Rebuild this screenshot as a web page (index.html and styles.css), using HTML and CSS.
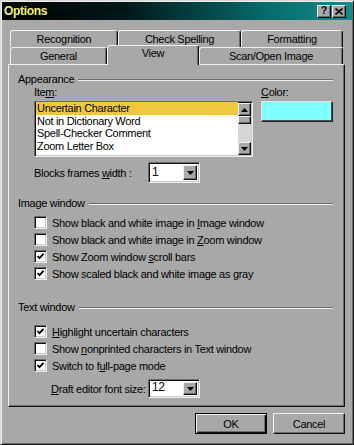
FILE: index.html
```html
<!DOCTYPE html>
<html lang="en">
<head>
    <meta charset="UTF-8">
    <title>Options</title>
    <link rel="stylesheet" href="styles.css">
</head>
<body>

<div class="window">
    <div class="titlebar">
        <span class="title">Options</span>
        <div class="caption-buttons">
            <span class="cap-btn help">?</span>
            <span class="cap-btn">
                <svg width="8" height="7" viewBox="0 0 8 7"><path d="M0.5 0.5L7.5 6.5M7.5 0.5L0.5 6.5" stroke="#000" stroke-width="1.6"/></svg>
            </span>
        </div>
    </div>

    <div class="client">
        <div class="tabs">
            <div class="tab-row">
                <div class="tab tab-recognition">Recognition</div>
                <div class="tab tab-spelling">Check Spelling</div>
                <div class="tab tab-formatting">Formatting</div>
            </div>
            <div class="tab-row">
                <div class="tab tab-general">General</div>
                <div class="tab tab-view selected">View</div>
                <div class="tab tab-scan">Scan/Open Image</div>
            </div>
        </div>

        <div class="panel">
            <div class="group-title"><span>Appearance</span></div>
            <div class="appearance">
                <div class="item-col">
                    <label class="field-label">Ite<u>m</u>:</label>
                    <div class="listbox">
                        <div class="list-items">
                            <div class="list-item selected">Uncertain Character</div>
                            <div class="list-item">Not in Dictionary Word</div>
                            <div class="list-item">Spell-Checker Comment</div>
                            <div class="list-item">Zoom Letter Box</div>
                            <div class="list-item">Zoom Letter Background</div>
                        </div>
                        <div class="scrollbar">
                            <div class="sb-btn"><svg width="7" height="4" viewBox="0 0 7 4"><path d="M3.5 0L7 4H0z"/></svg></div>
                            <div class="sb-thumb"></div>
                            <div class="sb-track"></div>
                            <div class="sb-btn"><svg width="7" height="4" viewBox="0 0 7 4"><path d="M0 0h7L3.5 4z"/></svg></div>
                        </div>
                    </div>
                </div>
                <div class="color-col">
                    <label class="field-label"><u>C</u>olor:</label>
                    <div class="swatch"></div>
                </div>
            </div>

            <div class="field-row blocks-row">
                <label>Blocks frames <u>w</u>idth :</label>
                <div class="combo">
                    <span class="combo-value">1</span>
                    <span class="combo-btn"><svg width="7" height="4" viewBox="0 0 7 4"><path d="M0 0h7L3.5 4z"/></svg></span>
                </div>
            </div>

            <div class="group-title image-title"><span>Image window</span></div>
            <div class="checks image-checks">
                <div class="check-row"><span class="checkbox"></span><span>Show black and white image in <u>I</u>mage window</span></div>
                <div class="check-row"><span class="checkbox"></span><span>Show black and white image in <u>Z</u>oom window</span></div>
                <div class="check-row"><span class="checkbox checked"><svg width="9" height="9" viewBox="0 0 9 9"><path d="M1.5 4L3.5 6.2L7.5 1.8" fill="none" stroke="#000" stroke-width="1.8"/></svg></span><span>Show Zoom window <u>s</u>croll bars</span></div>
                <div class="check-row"><span class="checkbox checked"><svg width="9" height="9" viewBox="0 0 9 9"><path d="M1.5 4L3.5 6.2L7.5 1.8" fill="none" stroke="#000" stroke-width="1.8"/></svg></span><span>Show scaled black and white image as gray</span></div>
            </div>

            <div class="group-title text-title"><span>Text window</span></div>
            <div class="checks text-checks">
                <div class="check-row"><span class="checkbox checked"><svg width="9" height="9" viewBox="0 0 9 9"><path d="M1.5 4L3.5 6.2L7.5 1.8" fill="none" stroke="#000" stroke-width="1.8"/></svg></span><span><u>H</u>ighlight uncertain characters</span></div>
                <div class="check-row"><span class="checkbox"></span><span>Show <u>n</u>onprinted characters in Text window</span></div>
                <div class="check-row"><span class="checkbox checked"><svg width="9" height="9" viewBox="0 0 9 9"><path d="M1.5 4L3.5 6.2L7.5 1.8" fill="none" stroke="#000" stroke-width="1.8"/></svg></span><span>Switch to f<u>u</u>ll-page mode</span></div>
            </div>

            <div class="field-row draft-row">
                <label class="draft-label"><u>D</u>raft editor font size:</label>
                <div class="combo combo-short">
                    <span class="combo-value">12</span>
                    <span class="combo-btn"><svg width="7" height="4" viewBox="0 0 7 4"><path d="M0 0h7L3.5 4z"/></svg></span>
                </div>
            </div>
        </div>

        <div class="buttons">
            <button class="btn btn-default">OK</button>
            <button class="btn">Cancel</button>
        </div>
    </div>
</div>

</body>
</html>
```

FILE: styles.css
```css
* {
    margin: 0;
    padding: 0;
    box-sizing: border-box;
}

body {
    width: 354px;
    height: 445px;
    background-color: #a8a8a8;
    font: 11px "Liberation Sans", Arial, sans-serif;
    letter-spacing: -0.3px;
    color: #000;
    overflow: hidden;
}

u {
    text-decoration-thickness: 1px;
    text-underline-offset: 1px;
}

/* window frame */
.window {
    width: 354px;
    height: 445px;
    padding: 1px;
    border: 1px solid;
    border-color: #d8d8d8 #1a1a1a #1a1a1a #d8d8d8;
    box-shadow: inset 1px 1px #f0f0f0, inset -1px -1px #6c6c6c;
}

.titlebar {
    height: 18px;
    display: flex;
    align-items: center;
    justify-content: space-between;
    padding: 0 6px 0 2px;
    background: linear-gradient(to right, #000000 0%, #001818 35%, #076a6a 75%, #138c8c 100%);
}

.title {
    color: #f4f07a;
    font-weight: bold;
    font-size: 12px;
}

.caption-buttons {
    display: flex;
    gap: 1px;
}

.cap-btn {
    width: 14px;
    height: 13px;
    display: flex;
    align-items: center;
    justify-content: center;
    background-color: #a8a8a8;
    border: 1px solid;
    border-color: #f0f0f0 #101010 #101010 #f0f0f0;
    box-shadow: inset -1px -1px #6c6c6c;
}

.help {
    font-weight: bold;
    font-size: 10px;
    line-height: 10px;
}

/* tabs */
.client {
    padding: 10px 6px 0 6px;
}

.tabs {
    margin-left: 2px;
}

.tab-row {
    display: flex;
    height: 17px;
}

.tab {
    height: 17px;
    line-height: 16px;
    text-align: center;
    background-color: #a8a8a8;
    border-top: 1px solid #f0f0f0;
    border-left: 1px solid #f0f0f0;
    border-right: 1px solid #101010;
    box-shadow: inset -1px 0 #6c6c6c;
    border-radius: 3px 3px 0 0;
}

.tab-recognition { width: 108px; }
.tab-spelling { width: 123px; }
.tab-formatting { width: 102px; }
.tab-general { width: 97px; }
.tab-view { width: 92px; }
.tab-scan { width: 144px; }

.tab.selected {
    position: relative;
    z-index: 1;
    height: 20px;
    margin-top: -2px;
    line-height: 14px;
}

/* panel */
.panel {
    width: 337px;
    height: 343px;
    padding: 8px 11px 0 9px;
    border: 1px solid;
    border-color: #f0f0f0 #101010 #101010 #f0f0f0;
    box-shadow: inset -1px -1px #6c6c6c;
}

.group-title {
    display: flex;
    align-items: center;
    gap: 4px;
    height: 13px;
    line-height: 13px;
}

.group-title::after {
    content: "";
    flex: 1;
    border-top: 1px solid #6c6c6c;
    border-bottom: 1px solid #f0f0f0;
}

.appearance {
    display: flex;
    gap: 8px;
    margin-left: 16px;
}

.field-label {
    display: block;
    height: 13px;
    line-height: 13px;
    margin-bottom: 2px;
}

.item-col {
    width: 221px;
}

.listbox {
    display: flex;
    height: 56px;
    background-color: #fff;
    border: 1px solid;
    border-color: #6c6c6c #f0f0f0 #f0f0f0 #6c6c6c;
    box-shadow: inset 1px 1px #101010, inset -1px -1px #c8c8c8;
    padding: 1px;
}

.list-items {
    flex: 1;
    overflow: hidden;
    margin-top: -1px;
}

.list-item {
    line-height: 12.7px;
    padding-left: 1px;
    white-space: nowrap;
}

.list-item.selected {
    background-color: #efc93a;
}

.scrollbar {
    width: 13px;
    display: flex;
    flex-direction: column;
}

.sb-btn,
.sb-thumb {
    background-color: #a8a8a8;
    border: 1px solid;
    border-color: #f0f0f0 #101010 #101010 #f0f0f0;
    box-shadow: inset -1px -1px #6c6c6c;
}

.sb-btn {
    height: 13px;
    display: flex;
    align-items: center;
    justify-content: center;
}

.sb-thumb {
    height: 8px;
}

.sb-track {
    flex: 1;
    background-color: #d6d6d6;
}

.swatch {
    width: 72px;
    height: 21px;
    background-color: #80ffff;
    border: 1px solid;
    border-color: #e0e0e0 #202020 #202020 #e0e0e0;
    box-shadow: inset -1px -1px #505050;
}

/* combo rows */
.field-row {
    display: grid;
    grid-template-columns: 114px 52px;
    align-items: center;
    margin-left: 16px;
}

.blocks-row {
    margin-top: 5px;
}

.draft-row {
    margin-top: 5px;
}

.draft-label {
    padding-left: 17px;
}

.combo {
    display: flex;
    height: 21px;
    background-color: #fff;
    border: 1px solid;
    border-color: #6c6c6c #f0f0f0 #f0f0f0 #6c6c6c;
    box-shadow: inset 1px 1px #101010, inset -1px -1px #c8c8c8;
    padding: 2px;
}

.combo-short {
    height: 19px;
}

.combo-value {
    flex: 1;
    padding-left: 1px;
    line-height: 15px;
    font-size: 12px;
}

.combo-short .combo-value {
    line-height: 11px;
}

.combo-btn {
    width: 14px;
    display: flex;
    align-items: center;
    justify-content: center;
    background-color: #a8a8a8;
    border: 1px solid;
    border-color: #f0f0f0 #101010 #101010 #f0f0f0;
    box-shadow: inset -1px -1px #6c6c6c;
}

/* check boxes */
.image-title {
    margin-top: 14px;
}

.text-title {
    margin-top: 19px;
}

.checks {
    margin-left: 16px;
}

.image-checks {
    margin-top: 4px;
}

.text-checks {
    margin-top: 9px;
}

.check-row {
    display: flex;
    align-items: center;
    gap: 5px;
    height: 17px;
    white-space: nowrap;
}

.checkbox {
    width: 13px;
    height: 13px;
    display: flex;
    align-items: center;
    justify-content: center;
    background-color: #fff;
    border: 1px solid;
    border-color: #6c6c6c #f0f0f0 #f0f0f0 #6c6c6c;
    box-shadow: inset 1px 1px #101010, inset -1px -1px #c8c8c8;
}

/* dialog buttons */
.buttons {
    width: 337px;
    display: flex;
    justify-content: flex-end;
    gap: 6px;
    margin-top: 6px;
}

.btn {
    width: 72px;
    height: 21px;
    font: inherit;
    letter-spacing: inherit;
    color: #000;
    background-color: #a8a8a8;
    border: 1px solid;
    border-color: #f0f0f0 #101010 #101010 #f0f0f0;
    box-shadow: inset -1px -1px #6c6c6c;
}

.btn-default {
    border-color: #000;
    box-shadow: inset 1px 1px #f0f0f0, inset -1px -1px #101010, inset -2px -2px #6c6c6c;
}
```
